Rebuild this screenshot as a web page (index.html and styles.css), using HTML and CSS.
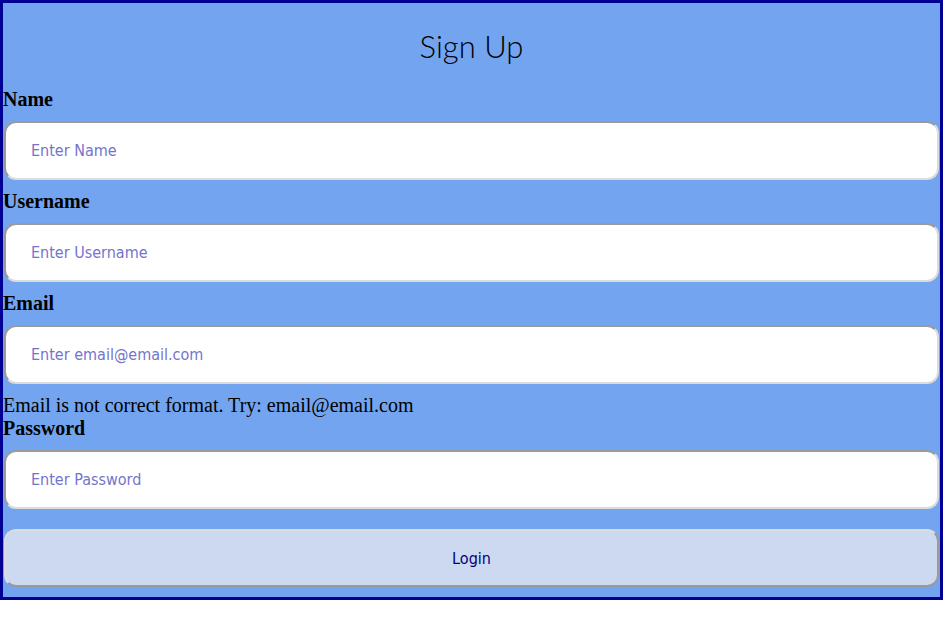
FILE: index.html
```html
<!DOCTYPE html>
<html lang="en">
<head>
<meta charset="utf-8">
<title>Sign Up</title>
<link rel="stylesheet" href="styles.css">
</head>
<body>
<div class="card">
  <h1 class="title">Sign Up</h1>
  <form class="form">
    <label class="label" for="name">Name</label>
    <input class="field" id="name" type="text" placeholder="Enter Name">
    <label class="label" for="username">Username</label>
    <input class="field" id="username" type="text" placeholder="Enter Username">
    <label class="label" for="email">Email</label>
    <input class="field" id="email" type="text" placeholder="Enter email@email.com">
    <div class="error">Email is not correct format. Try: email@email.com</div>
    <label class="label" for="password">Password</label>
    <input class="field" id="password" type="password" placeholder="Enter Password">
    <button class="btn" type="button">Login</button>
  </form>
</div>
</body>
</html>
```

FILE: styles.css
```css
html, body {
  margin: 0;
  padding: 0;
  background: #ffffff;
}

.card {
  width: 937px;
  border: 3px solid #000095;
  background: #72a4ef;
  display: flex;
  flex-direction: column;
}

.title {
  margin: 0;
  padding: 24px 0 0;
  height: 61px;
  font-family: "Lato", "Roboto", sans-serif;
  font-weight: 300;
  font-size: 31px;
  line-height: 38px;
  text-align: center;
  color: #000000;
}

.form {
  display: flex;
  flex-direction: column;
  margin: 0;
}

.label {
  font-family: "Liberation Serif", "Times New Roman", serif;
  font-weight: bold;
  font-size: 20px;
  line-height: 23px;
  height: 23px;
  color: #000000;
}

.field {
  box-sizing: border-box;
  height: 59px;
  margin: 10px 1px;
  padding: 0 25px;
  border: 2px solid;
  border-color: #9a9a9a #dcdcdc #dcdcdc #9a9a9a;
  border-radius: 12px;
  background: #ffffff;
  font-family: "DejaVu Sans Condensed", "DejaVu Sans", sans-serif;
  font-stretch: condensed;
  font-size: 16px;
  color: #000000;
  outline: none;
}

.field::placeholder {
  color: #7474cc;
  opacity: 1;
}

.error {
  font-family: "Liberation Serif", "Times New Roman", serif;
  font-size: 20px;
  line-height: 23px;
  height: 23px;
  color: #000000;
}

.btn {
  box-sizing: border-box;
  height: 58px;
  margin: 10px 1px 10px;
  border: 2px solid;
  border-color: #dcdcdc #9a9a9a #9a9a9a #dcdcdc;
  border-radius: 12px;
  background: #cdd9f0;
  font-family: "DejaVu Sans Condensed", "DejaVu Sans", sans-serif;
  font-stretch: condensed;
  font-size: 16px;
  color: #000080;
  cursor: pointer;
}
```
